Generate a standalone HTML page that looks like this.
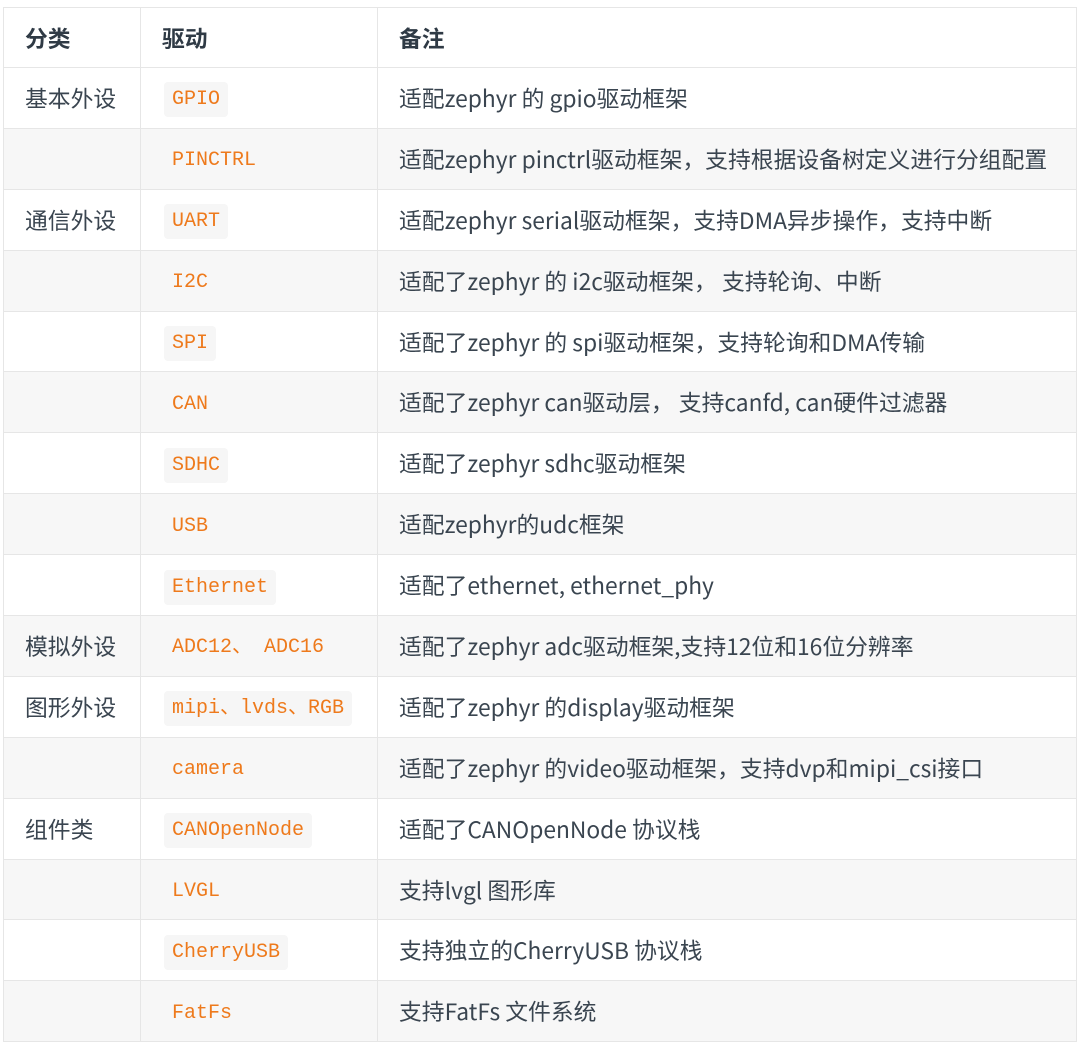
<!DOCTYPE html>
<html><head><meta charset="utf-8"><style>
html,body{margin:0;padding:0;background:#fff;width:1080px;height:1046px;overflow:hidden}
table{position:absolute;left:3px;top:7px;border-collapse:collapse;width:1074px;font-family:"Noto Sans CJK SC","Liberation Sans",sans-serif;font-size:22.8px;color:#3a4550}
td,th{border:1.5px solid #e6e6e6;padding:0 0 0 21px;text-align:left;height:60.9px;box-sizing:border-box;white-space:nowrap;line-height:30px}
th{font-weight:bold;color:#2f3a45;height:60px}
tr:nth-child(odd) td{background:#f7f7f7}
tr:first-child th{background:#fff}
td:nth-child(2){padding-left:23px}
code{font-family:"Liberation Mono","Noto Sans CJK SC",monospace;font-size:20px;color:#ee7a1c;background:#f6f6f6;padding:6px 8px;border-radius:4px}
tr:nth-child(odd) code{background:transparent}
</style></head><body>
<table>
<colgroup><col style="width:137px"><col style="width:237px"><col></colgroup>
<tr><th>分类</th><th>驱动</th><th>备注</th></tr>
<tr><td>基本外设</td><td><code>GPIO</code></td><td>适配zephyr 的 gpio驱动框架</td></tr>
<tr><td></td><td><code>PINCTRL</code></td><td>适配zephyr pinctrl驱动框架，支持根据设备树定义进行分组配置</td></tr>
<tr><td>通信外设</td><td><code>UART</code></td><td>适配zephyr serial驱动框架，支持DMA异步操作，支持中断</td></tr>
<tr><td></td><td><code>I2C</code></td><td>适配了zephyr 的 i2c驱动框架， 支持轮询、中断</td></tr>
<tr><td></td><td><code>SPI</code></td><td>适配了zephyr 的 spi驱动框架，支持轮询和DMA传输</td></tr>
<tr><td></td><td><code>CAN</code></td><td>适配了zephyr can驱动层， 支持canfd, can硬件过滤器</td></tr>
<tr><td></td><td><code>SDHC</code></td><td>适配了zephyr sdhc驱动框架</td></tr>
<tr><td></td><td><code>USB</code></td><td>适配zephyr的udc框架</td></tr>
<tr><td></td><td><code>Ethernet</code></td><td>适配了ethernet, ethernet_phy</td></tr>
<tr><td>模拟外设</td><td><code>ADC12、 ADC16</code></td><td>适配了zephyr adc驱动框架,支持12位和16位分辨率</td></tr>
<tr><td>图形外设</td><td><code>mipi、lvds、RGB</code></td><td>适配了zephyr 的display驱动框架</td></tr>
<tr><td></td><td><code>camera</code></td><td>适配了zephyr 的video驱动框架，支持dvp和mipi_csi接口</td></tr>
<tr><td>组件类</td><td><code>CANOpenNode</code></td><td>适配了CANOpenNode 协议栈</td></tr>
<tr><td></td><td><code>LVGL</code></td><td>支持lvgl 图形库</td></tr>
<tr><td></td><td><code>CherryUSB</code></td><td>支持独立的CherryUSB 协议栈</td></tr>
<tr><td></td><td><code>FatFs</code></td><td>支持FatFs 文件系统</td></tr>
</table>
</body></html>
